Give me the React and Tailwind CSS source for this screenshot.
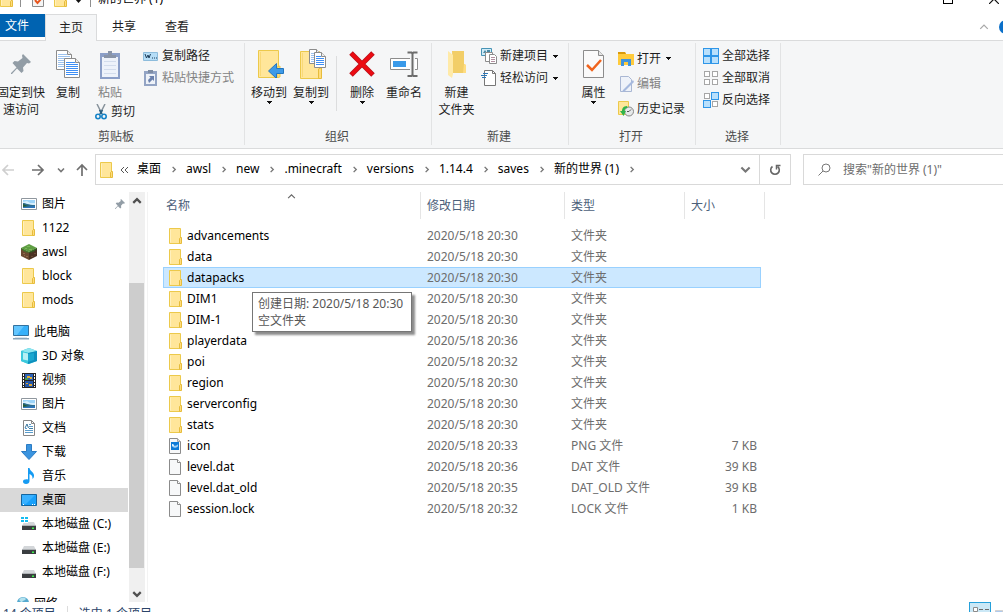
import React from 'react';

/* ---------- small glyphs ---------- */

const Caret = () => (
  <svg width="5" height="3" viewBox="0 0 5 3" className="shrink-0" shapeRendering="crispEdges">
    <path d="M0 0h5v1H4v1H3v1H2V2H1V1H0z" fill="#111" />
  </svg>
);

const Chevron = ({ dir = 'right', color = '#777', size = 8, stroke = 1.6 }) => {
  const paths = {
    right: 'M3 1 L6 4 L3 7',
    down: 'M1 2.5 L4 5.5 L7 2.5',
    up: 'M1 5.5 L4 2.5 L7 5.5',
  };
  return (
    <svg width={size} height={size} viewBox="0 0 8 8" fill="none" className="shrink-0">
      <path d={paths[dir]} stroke={color} strokeWidth={stroke} />
    </svg>
  );
};

/* ---------- file and folder icons ---------- */

const FolderIcon = () => (
  <svg width="14" height="16" viewBox="0 0 14 16" className="shrink-0">
    <path d="M.5 .5h11v15H.5z" fill="#ffe69a" stroke="#ecc94b" />
    <path d="M1.5 1.5v13" stroke="#fff0bd" />
    <path d="M10.5 10.5l1.5-1.5l.5 1v5.5h-2z" fill="#ffdc7c" stroke="#e6bc3c" />
  </svg>
);

const FileIcon = () => (
  <svg width="14" height="16" viewBox="0 0 14 16" className="shrink-0">
    <path d="M.5 .5h8l3 3v12H.5z" fill="#f7f8f9" stroke="#8b8b8b" />
    <path d="M8.5 .5v3h3" fill="#fff" stroke="#8b8b8b" />
  </svg>
);

const ImageFileIcon = () => (
  <svg width="14" height="16" viewBox="0 0 14 16" className="shrink-0">
    <path d="M.5 .5h8l3 3v12H.5z" fill="#f7f8f9" stroke="#8b8b8b" />
    <path d="M8.5 .5v3h3" fill="#ddd" stroke="#a5a5a5" />
    <path d="M2 4h8v8H2z" fill="#0f7bd7" />
    <path d="M3 6h1l1 1l1 2l1-2l1 1l1-2v3l-1-1l-1 2l-1-1l-1 1l-1-2l-1 1z" fill="#d9efff" />
  </svg>
);

/* ---------- navigation pane icons ---------- */

const PictureIcon = () => (
  <svg width="16" height="16" viewBox="0 0 16 16">
    <path d="M.5 2.5h15v11H.5z" fill="#fff" stroke="#8f979e" />
    <path d="M2 4h12v8H2z" fill="#9ed5fa" />
    <path d="M2 6l4-1l3 2h5v2H2z" fill="#d7effd" />
    <path d="M2 7c3 0 5 2 12 2v3H2z" fill="#2e6d8f" />
    <path d="M2 8c3 1 4 2 7 2l-7 1z" fill="#255a38" />
    <path d="M2 11l12-1v2H2z" fill="#2c75bc" />
  </svg>
);

const GrassBlockIcon = () => (
  <svg width="16" height="16" viewBox="0 0 16 16">
    <path d="M0 4l8 4v8l-7-3.500L0 12z" fill="#6b4a33" />
    <path d="M16 4L8 8v8l7-3.500l1-.5z" fill="#4b3223" />
    <path d="M8 0l8 4l-8 4l-8-4z" fill="#5f9e43" />
    <path d="M0 4l8 4v1l-2-1v1l-2-2v1L0 5z" fill="#3f7a2c" />
    <path d="M16 4L8 8v1l2-1v1l2-2v1l4-3z" fill="#2f6421" />
    <path d="M2 9h2v1H2zM5 12h2v1H5zM3 11h1v1H3z" fill="#8f6a4c" />
    <path d="M10 12h2v1h-2zM13 9h2v1h-2z" fill="#6a4a36" />
    <path d="M6 2h3v1H6zM8 5h3v1H8zM4 4h2v1H4z" fill="#79b857" />
  </svg>
);

const ComputerIcon = () => (
  <svg width="16" height="16" viewBox="0 0 16 16">
    <path d="M.5 1.500h15v10H.5z" fill="#37b1fa" stroke="#33729f" />
    <path d="M1 2h10L4 11H1z" fill="#63c6ff" />
    <path d="M2 13h12v1H2z" fill="#dbe5ec" />
    <path d="M0 14h16v1.500H0z" fill="#8ba6bb" />
  </svg>
);

const CubeIcon = () => (
  <svg width="16" height="16" viewBox="0 0 16 16">
    <path d="M8 0l8 3v10l-8 3l-8-3V3z" fill="#2bbfd8" />
    <path d="M8 0l8 3l-8 2l-8-2z" fill="#8fe6ef" />
    <path d="M7 5l9-2v10l-9 3z" fill="#0e8fbd" />
    <path d="M0 3l7 2v11l-7-3z" fill="#3cc9dc" />
    <path d="M2 4.500l5 1v7l-5-1z" fill="#b5f0f4" />
    <path d="M7 6l6-1v7l-6 2z" fill="#1aa7cf" />
  </svg>
);

const FilmIcon = () => (
  <svg width="16" height="16" viewBox="0 0 16 16" shapeRendering="crispEdges">
    <path d="M1 1h14v15H1z" fill="#262626" />
    <path d="M4 2h8v6H4z" fill="#2d62b8" />
    <path d="M4 9h8v6H4z" fill="#2457a8" />
    <path d="M6 4h3v2H6zM9 5h2v2H9z" fill="#e0b034" />
    <path d="M5 11h2v1H5zM8 12h3v2H8z" fill="#dca635" />
    <path d="M4 6h3v2H4z" fill="#4f9c4a" />
    <path d="M2 2h1v2H2zM2 5h1v2H2zM2 8h1v2H2zM2 11h1v2H2zM2 14h1v1H2zM13 2h1v2h-1zM13 5h1v2h-1zM13 8h1v2h-1zM13 11h1v2h-1zM13 14h1v1h-1z" fill="#fff" />
  </svg>
);

const DocumentIcon = () => (
  <svg width="16" height="16" viewBox="0 0 16 16">
    <path d="M2.500 .5h8l3 3v12h-11z" fill="#fff" stroke="#868686" />
    <path d="M10.500 .5v3h3" fill="none" stroke="#868686" />
    <path d="M8 4.500h2M8 6.500h4M4 10.500h8M4 12.500h8M4 8.500h2" stroke="#5a9ccb" />
    <path d="M4 8l2-4l1.500 4" fill="none" stroke="#3a759c" />
    <path d="M8 8h4v1H8z" fill="#3f7fa6" />
  </svg>
);

const DownloadIcon = () => (
  <svg width="16" height="16" viewBox="0 0 16 16">
    <path d="M5.500 .5h5v7h5L8 15.500L.5 7.500h5z" fill="#3b94df" stroke="#2c7cc4" />
  </svg>
);

const MusicIcon = () => (
  <svg width="16" height="16" viewBox="0 0 16 16">
    <path d="M7 0h1.500c.5 3 4 4 4.500 7c.2 2-.5 3-1.500 4c.3-3-1-4-3-5v7c0 2-1.500 3-3.500 3S2 15 2 13.500S4 11 7 11.500z" fill="#159bf3" />
  </svg>
);

const DesktopIcon = () => (
  <svg width="16" height="16" viewBox="0 0 16 16">
    <path d="M.5 2.500h15v11H.5z" fill="#18a0fb" stroke="#14659f" />
    <path d="M1 3h13L5 12H1z" fill="#39b1ff" />
    <path d="M2 12h1v1H2zM11 12h1v1h-1zM13 12h1v1h-1z" fill="#fff" />
  </svg>
);

const DriveIcon = ({ system }) => (
  <svg width="16" height="16" viewBox="0 0 16 16">
    <path d="M3 6h10l2 4H1z" fill="#d3d6d9" />
    <path d="M1 10h14v4H1z" fill="#3a3d40" />
    <path d="M1 9h14v1H1z" fill="#aeb2b5" />
    <path d="M11 11.500h2v1.500h-2z" fill="#3cf04a" />
    {system && (
      <>
        <path d="M0 0h7v7H0z" fill="#fff" />
        <path d="M0 1h3v2H0zM4 1h3v2H4zM0 4h3v2H0zM4 4h3v2H4z" fill="#14bdf2" />
      </>
    )}
  </svg>
);

const NetworkIcon = () => (
  <svg width="16" height="16" viewBox="0 0 16 16">
    <circle cx="10" cy="7" r="6" fill="#55a9cf" />
    <path d="M6 4c2-3 5-3 7-1c-1 2-4 1-4 4z" fill="#b4e2ee" />
    <path d="M3 8h5v5H3z" fill="#5ab3e8" />
  </svg>
);

const PinIcon = ({ size = 10 }) => (
  <svg width={size} height={size} viewBox="0 0 20 20" className="shrink-0">
    <path d="M12 0l8 8l-2 1.500l-2-.5l-4 4.500l.5 3.500l-2 2l-4.500-4.500L1 20H0v-1l5.500-5.500L1.500 9l2-2l3.500 .5L11.500 4L11 1.500z" fill="#929da6" />
  </svg>
);

/* ---------- ribbon icons ---------- */

const Sheet = ({ x, y, w, h, line = '#6ea3e8' }) => (
  <g transform={`translate(${x} ${y})`}>
    <path d={`M.5 .5H${w - 4.5}L${w - 0.5} 4.500V${h - 0.5}H.5z`} fill="#fff" stroke="#8c8c8c" />
    <path d={`M${w - 4.5} .5V4.500H${w - 0.5}`} fill="#eee" stroke="#8c8c8c" />
    {[4, 6, 8, 10, 12, 14, 16].filter((n) => n < h - 2).map((n) => (
      <path key={n} d={`M2 ${n + 0.5}H${n < 6 ? w - 5 : w - 2}`} stroke={line} />
    ))}
  </g>
);

const CopyIcon = () => (
  <svg width="24" height="28" viewBox="0 0 24 28">
    <Sheet x={0} y={0} w={16} h={20} line="#9cc2ee" />
    <Sheet x={8} y={8} w={16} h={20} line="#3f8ff5" />
  </svg>
);

const PasteIcon = () => (
  <svg width="22" height="29" viewBox="0 0 22 29">
    <path d="M1 3h20v26H1z" fill="#8b9fc8" />
    <path d="M3 7h16v20H3z" fill="#edf2fa" />
    <path d="M5 5h12v3H5zM9 1h4v4H9z" fill="#8894a8" />
    <path d="M5 11.500h12M5 15.500h12M5 19.500h12M5 23.500h12" stroke="#d2dcec" />
  </svg>
);

const ScissorsIcon = () => (
  <svg width="14" height="16" viewBox="-1 0 14 16" fill="none" className="shrink-0">
    <path d="M2 0l5 10M10 0L5 10" stroke="#88939c" strokeWidth="1.500" />
    <path d="M4.500 6L7 10M7.500 6L5 10" stroke="#2b5f80" strokeWidth="1.500" />
    <circle cx="3" cy="12.500" r="2.200" stroke="#1683c7" strokeWidth="1.600" />
    <circle cx="9" cy="12.500" r="2.200" stroke="#1683c7" strokeWidth="1.600" />
  </svg>
);

const CopyPathIcon = () => (
  <svg width="16" height="16" viewBox="0 0 16 16" className="shrink-0">
    <path d="M.5 4.500h14v8H.5z" fill="#b5ddf7" stroke="#8dbcdc" />
    <path d="M2 6l1.500 4L5 7l1 3l1.500-4M9 10h1M11 10h1M13 10h1" fill="none" stroke="#1d3f5c" />
  </svg>
);

const PasteShortcutIcon = () => (
  <svg width="16" height="16" viewBox="0 0 16 16" className="shrink-0">
    <path d="M1 1h13v15H1z" fill="#93a4c4" />
    <path d="M3 4h9v10H3z" fill="#eef2f8" />
    <path d="M5 0h5v3H5z" fill="#7e8ca3" />
    <path d="M6 6h5v5L9.500 9.500L6 13l-1-3l2.500-2.500z" fill="#6b81ad" />
  </svg>
);

const MoveToIcon = () => (
  <svg width="26" height="28" viewBox="2 0 26 28" className="ml-1">
    <path d="M2.500 .5h20v27h-20z" fill="#ffe69a" stroke="#ecc94b" />
    <path d="M4.500 2v24" stroke="#f9d978" />
    <path d="M21 27.500V17l3-1v11z" fill="#ffdc7c" stroke="#ecc94b" />
    <path d="M27.500 18.500h-7v-5L12.500 21l8 7.500v-5h7z" fill="#3d9ae8" stroke="#2476bd" />
  </svg>
);

const CopyToIcon = () => (
  <svg width="26" height="30" viewBox="2 0 26 30" className="ml-1">
    <path d="M2.500 2.500h19v27h-19z" fill="#ffe69a" stroke="#ecc94b" />
    <path d="M4.500 4v24" stroke="#f9d978" />
    <path d="M20.500 29.500V20l3-1.500v11z" fill="#ffdc7c" stroke="#e6bc3c" />
    <Sheet x={11} y={0} w={12} h={15} line="#9cc2ee" />
    <Sheet x={16} y={3} w={12} h={16} line="#3f8ff5" />
  </svg>
);

const DeleteIcon = () => (
  <svg width="26" height="26" viewBox="0 0 26 26">
    <path d="M2 2l22 22M24 2L2 24" stroke="#b9121b" strokeWidth="5" />
    <path d="M2.500 2.500l21 21M23.500 2.500l-21 21" stroke="#ec0b12" strokeWidth="3.500" />
  </svg>
);

const RenameIcon = () => (
  <svg width="28" height="26" viewBox="0 0 28 26">
    <path d="M.5 7.500h27v11H.5z" fill="#fff" stroke="#8c8c8c" />
    <path d="M3 10h13v6H3z" fill="#3a9ae9" />
    <path d="M20 7h5v12h-5z" fill="#f5f6f7" />
    <path d="M17.500 1.500h4l1 1l1-1h4M22.500 2v22M17.500 25h4l1-1l1 1h4" fill="none" stroke="#6c6c6c" strokeWidth="2" />
  </svg>
);

const NewFolderIcon = () => (
  <svg width="20" height="28" viewBox="0 0 20 28">
    <path d="M5 1h12v13l2 1v8H6z" fill="#f2ce68" />
    <path d="M17 14l2 1v8h-3z" fill="#ffdd81" />
    <path d="M1 1l5 4v19l-1 4l-4-3z" fill="#ffeaa8" />
  </svg>
);

const NewItemIcon = () => (
  <svg width="16" height="16" viewBox="0 0 16 16" className="shrink-0">
    <path d="M.5 .5h10v7H.5z" fill="#d0ebf7" stroke="#4793b5" />
    <path d="M2 5l2-3l2 3zM6 2h3v2H6z" fill="#4a8aa5" />
    <path d="M4.500 4.500h7v9h-7z" fill="#fff" stroke="#8c8c8c" />
    <path d="M8.500 6.500h5l2 2v7h-7z" fill="#fff" stroke="#8c8c8c" />
    <path d="M10 9.500h4M10 11.500h4M10 13.500h4" stroke="#b28fa0" />
  </svg>
);

const EasyAccessIcon = () => (
  <svg width="16" height="16" viewBox="0 0 16 16" className="shrink-0">
    <path d="M3.500 .5h8l3 3v12h-11z" fill="#fff" stroke="#777" />
    <path d="M11.500 .5v3h3" fill="none" stroke="#777" />
    <path d="M2 3.500h5M0 5.500h6M1 7.500h4" stroke="#2c77b8" />
  </svg>
);

const PropertiesIcon = () => (
  <svg width="22" height="28" viewBox="0 0 22 28">
    <path d="M.5 .5h15l5 5v22H.5z" fill="#fafafa" stroke="#8c8c8c" />
    <path d="M15.500 .5v5h5" fill="#e6e6e6" stroke="#8c8c8c" />
    <path d="M4 15l5 5l9-10" fill="none" stroke="#f0641e" strokeWidth="2.500" />
  </svg>
);

const OpenIcon = () => (
  <svg width="16" height="16" viewBox="0 0 16 16" className="shrink-0">
    <path d="M0 1h7l1 2h8v11H0z" fill="#ffcb3c" />
    <path d="M0 1h7l1 2H0z" fill="#d99a0b" />
    <path d="M3 15V8h10v7h-3v-4H6v4z" fill="#3f93dd" />
  </svg>
);

const EditIcon = () => (
  <svg width="16" height="16" viewBox="0 0 16 16" className="shrink-0">
    <path d="M2.500 .5h8l3 3v12h-11z" fill="#eef2f9" stroke="#a9b7d3" />
    <path d="M15 4L5 14l-1 2l3-1l9-9z" fill="#a6b9de" />
  </svg>
);

const HistoryIcon = () => (
  <svg width="16" height="16" viewBox="0 0 16 16" className="shrink-0">
    <path d="M.5 .5h10v13H.5z" fill="#ffe69a" stroke="#ecc94b" />
    <circle cx="11" cy="10.500" r="4.500" fill="#e6e9ea" stroke="#858585" />
    <path d="M11 10.500l2-2M11 10.500h-2" fill="none" stroke="#555" />
    <path d="M9 5c-4 0-5 3-5 5H2l3.500 5L8 10H6.500c0-2 1-3 3-3z" fill="#31b44a" />
  </svg>
);

const selectCells = {
  all: [1, 1, 1, 1],
  none: [0, 0, 0, 0],
  invert: [0, 1, 1, 0],
};

const SelectIcon = ({ kind }) => (
  <svg width="16" height="16" viewBox="0 0 16 16" className="shrink-0" shapeRendering="crispEdges">
    {selectCells[kind].map((on, i) => {
      const x = (i % 2) * 8;
      const y = Math.floor(i / 2) * 8;
      return on ? (
        <rect key={i} x={x + 0.5} y={y + 0.5} width="7" height="7" fill="#b9e0fc" stroke="#2f96e8" />
      ) : (
        <rect key={i} x={x + 1.5} y={y + 1.5} width="5" height="5" fill="#fff" stroke="#a6a6a6" />
      );
    })}
  </svg>
);

/* ---------- ribbon ---------- */

const BigButton = ({ icon, lines, width = 'w-[42px]', caret, disabled }) => (
  <button
    type="button"
    disabled={disabled}
    className={`flex flex-col items-center shrink-0 ${width} ${disabled ? 'text-[#838383]' : ''}`}
  >
    <span className="flex h-7 items-center justify-center mb-[6px]">{icon}</span>
    {lines.map((line) => (
      <span key={line} className="whitespace-nowrap leading-[17px]">{line}</span>
    ))}
    {caret && <Caret />}
  </button>
);

const SmallButton = ({ icon, label, height = 'h-[22px]', caret, disabled }) => (
  <button
    type="button"
    disabled={disabled}
    className={`flex items-center gap-[3px] whitespace-nowrap ${height} ${disabled ? 'text-[#838383]' : ''}`}
  >
    {icon}
    <span>{label}</span>
    {caret && <span className="pl-[2px]"><Caret /></span>}
  </button>
);

const RibbonGroup = ({ title, width, captionPad = 'pr-0.5', children }) => (
  <section className={`shrink-0 border-r border-[#e2e3e4] ${width}`}>
    <div className="flex h-[86px] items-start">{children}</div>
    <h2 className={`text-center leading-4 text-[#4b4b4b] ${captionPad}`}>{title}</h2>
  </section>
);

const Ribbon = () => (
  <div className="flex border-y border-[#dadbdc] bg-[#f5f6f7] pt-[2px] pb-[3px]">
    <RibbonGroup title="剪贴板" width="w-[245px]" captionPad="pr-3">
      <div className="flex pt-[7px]">
        <BigButton icon={<PinIcon size={20} />} lines={['固定到快', '速访问']} />
        <BigButton icon={<CopyIcon />} lines={['复制']} width="w-[52px]" />
        <div className="w-[49px]">
          <BigButton icon={<PasteIcon />} lines={['粘贴']} width="w-8" disabled />
          <SmallButton icon={<ScissorsIcon />} label="剪切" />
        </div>
      </div>
      <div className="pt-[2px]">
        <SmallButton icon={<CopyPathIcon />} label="复制路径" />
        <SmallButton icon={<PasteShortcutIcon />} label="粘贴快捷方式" disabled />
      </div>
    </RibbonGroup>

    <RibbonGroup title="组织" width="w-[187px]">
      <div className="flex pl-[3px] pt-[7px]">
        <BigButton icon={<MoveToIcon />} lines={['移动到']} caret />
        <BigButton icon={<CopyToIcon />} lines={['复制到']} caret />
        <div className="mx-1 mt-[6px] h-[55px] border-r border-[#dcddde]" />
        <BigButton icon={<DeleteIcon />} lines={['删除']} caret />
        <BigButton icon={<RenameIcon />} lines={['重命名']} />
      </div>
    </RibbonGroup>

    <RibbonGroup title="新建" width="w-[137px]">
      <div className="pt-[7px]">
        <BigButton icon={<NewFolderIcon />} lines={['新建', '文件夹']} width="w-[49px]" />
      </div>
      <div className="pt-[2px]">
        <SmallButton icon={<NewItemIcon />} label="新建项目" caret />
        <SmallButton icon={<EasyAccessIcon />} label="轻松访问" caret />
      </div>
    </RibbonGroup>

    <RibbonGroup title="打开" width="w-[127px]">
      <div className="pt-[7px]">
        <BigButton icon={<PropertiesIcon />} lines={['属性']} width="w-[49px]" caret />
      </div>
      <div className="pt-[3px]">
        <SmallButton icon={<OpenIcon />} label="打开" height="h-[25px]" caret />
        <SmallButton icon={<EditIcon />} label="编辑" height="h-[25px]" disabled />
        <SmallButton icon={<HistoryIcon />} label="历史记录" height="h-[25px]" />
      </div>
    </RibbonGroup>

    <RibbonGroup title="选择" width="w-[85px]">
      <div className="pl-[7px] pt-[2px]">
        <SmallButton icon={<SelectIcon kind="all" />} label="全部选择" />
        <SmallButton icon={<SelectIcon kind="none" />} label="全部取消" />
        <SmallButton icon={<SelectIcon kind="invert" />} label="反向选择" />
      </div>
    </RibbonGroup>
  </div>
);

/* ---------- title bar and tabs ---------- */

const TitleBar = () => (
  <header className="flex h-[14px] shrink-0 items-end overflow-hidden">
    <div className="flex h-[30px] w-full items-center">
      <span className="w-[13px] overflow-hidden"><FolderIcon /></span>
      <span className="ml-[7px] h-4 border-l border-[#8f8f8f]" />
      <svg width="12" height="16" viewBox="0 0 12 16" className="ml-[11px]">
        <path d="M.5 .5h11v15H.5z" fill="#f5f5f5" stroke="#8c8c8c" />
        <path d="M3 9l2.500 3L9 8" fill="none" stroke="#e8561e" strokeWidth="2" />
      </svg>
      <span className="ml-[10px]"><FolderIcon /></span>
      <svg width="7" height="7" viewBox="0 0 7 7" className="ml-[7px]">
        <path d="M0 3h7L3.500 7z" fill="#111" />
      </svg>
      <span className="ml-2 h-4 border-l border-[#8f8f8f]" />
      <h1 className="ml-[7px] text-black">新的世界 (1)</h1>
      <div className="ml-auto flex items-center">
        <button type="button" aria-label="最大化" className="flex w-[46px] justify-start">
          <span className="h-[10px] w-[10px] border border-black" />
        </button>
        <button type="button" aria-label="关闭" className="w-[14px]">
          <svg width="10" height="10" viewBox="0 0 10 10">
            <path d="M0 0l10 10M10 0L0 10" stroke="#111" strokeWidth="1.200" />
          </svg>
        </button>
      </div>
    </div>
  </header>
);

const Tabs = () => (
  <nav className="flex h-[26px] shrink-0">
    <button type="button" className="h-[23px] w-[45px] bg-[#0063b1] pr-[11px] text-white">文件</button>
    <button type="button" className="relative -mb-px w-[52px] border border-b-0 border-[#dadbdc] bg-[#f5f6f7]">主页</button>
    <button type="button" className="w-[54px]">共享</button>
    <button type="button" className="w-[52px]">查看</button>
    <div className="ml-auto flex items-center overflow-hidden">
      <button type="button" aria-label="折叠功能区"><Chevron dir="up" color="#a8a8a8" size={10} stroke={1} /></button>
      <span className="ml-[10px] w-1 overflow-hidden">
        <svg width="14" height="14" viewBox="0 0 14 14" className="max-w-none">
          <circle cx="7" cy="7" r="7" fill="#0a6fc9" />
        </svg>
      </span>
    </div>
  </nav>
);

/* ---------- address bar ---------- */

const crumbs = ['桌面', 'awsl', 'new', '.minecraft', 'versions', '1.14.4', 'saves', '新的世界 (1)'];

const NavArrow = ({ d, color, label }) => (
  <button type="button" aria-label={label}>
    <svg width="14" height="14" viewBox="0 0 14 14" fill="none">
      <path d={d} stroke={color} strokeWidth="1.700" />
    </svg>
  </button>
);

const AddressBar = () => (
  <div className="flex h-[43px] shrink-0 items-start pt-[5px]">
    <div className="flex h-[31px] w-[95px] shrink-0 items-center pl-px">
      <NavArrow label="后退" color="#cfcfcf" d="M13 7H2M7 2L2 7l5 5" />
      <span className="ml-4 flex"><NavArrow label="前进" color="#6f6f6f" d="M1 7h11M7 2l5 5l-5 5" /></span>
      <button type="button" aria-label="最近位置" className="ml-3"><Chevron dir="down" /></button>
      <span className="ml-[10px] flex"><NavArrow label="上移" color="#6f6f6f" d="M7 13V2M2 7l5-5l5 5" /></span>
    </div>
    <div className="flex h-[31px] min-w-0 flex-1 items-center border border-[#d9d9d9] text-black">
      <span className="ml-1"><FolderIcon /></span>
      <svg width="9" height="8" viewBox="0 0 9 8" fill="none" className="ml-[6px] mr-2 shrink-0">
        <path d="M4 1L1 4l3 3M8 1L5 4l3 3" stroke="#555" />
      </svg>
      {crumbs.map((crumb) => (
        <React.Fragment key={crumb}>
          <a href="#" className="whitespace-nowrap pb-px">{crumb}</a>
          <span className="flex w-[25px] shrink-0 justify-center"><Chevron size={7} /></span>
        </React.Fragment>
      ))}
      <button type="button" aria-label="展开" className="ml-auto flex h-full w-7 items-center justify-center">
        <Chevron dir="down" size={11} stroke={1.5} />
      </button>
      <button type="button" aria-label="刷新" className="flex h-full w-[31px] items-center justify-center border-l border-[#d9d9d9]">
        <svg width="12" height="12" viewBox="0 0 12 12" fill="none">
          <path d="M3.500 2.500A4.300 4.300 0 1 0 8.500 2.500" stroke="#666" strokeWidth="1.600" />
          <path d="M7.500 5.500v-4h4" stroke="#666" strokeWidth="1.500" />
        </svg>
      </button>
    </div>
    <label className="ml-3 flex h-[31px] w-[200px] shrink-0 items-center border border-r-0 border-[#d9d9d9] pl-[14px]">
      <svg width="13" height="13" viewBox="0 0 13 13" fill="none" className="shrink-0">
        <circle cx="8" cy="5" r="4" stroke="#777" />
        <path d="M5 8L.5 12.500" stroke="#777" />
      </svg>
      <input
        type="search"
        aria-label="搜索"
        placeholder={'搜索"新的世界 (1)"'}
        className="ml-3 w-full min-w-0 bg-transparent outline-none placeholder:text-[#6d6d6d]"
      />
    </label>
  </div>
);

/* ---------- navigation pane ---------- */

const navGroups = [
  [
    { label: '图片', icon: <PictureIcon />, pinned: true },
    { label: '1122', icon: <FolderIcon /> },
    { label: 'awsl', icon: <GrassBlockIcon /> },
    { label: 'block', icon: <FolderIcon /> },
    { label: 'mods', icon: <FolderIcon /> },
  ],
  [
    { label: '此电脑', icon: <ComputerIcon />, root: true },
    { label: '3D 对象', icon: <CubeIcon /> },
    { label: '视频', icon: <FilmIcon /> },
    { label: '图片', icon: <PictureIcon /> },
    { label: '文档', icon: <DocumentIcon /> },
    { label: '下载', icon: <DownloadIcon /> },
    { label: '音乐', icon: <MusicIcon /> },
    { label: '桌面', icon: <DesktopIcon />, active: true },
    { label: '本地磁盘 (C:)', icon: <DriveIcon system /> },
    { label: '本地磁盘 (E:)', icon: <DriveIcon /> },
    { label: '本地磁盘 (F:)', icon: <DriveIcon /> },
  ],
  [{ label: '网络', icon: <NetworkIcon />, root: true }],
];

const NavPane = () => (
  <aside className="flex w-[148px] shrink-0 border-r border-[#f3f3f3]">
    <div className="flex w-32 flex-col gap-2 overflow-hidden">
      {navGroups.map((group, i) => (
        <ul key={i} className="shrink-0">
          {group.map((item) => (
            <li key={item.label}>
              <a
                href="#"
                className={`flex h-6 items-center whitespace-nowrap pr-[3px] text-black ${item.root ? 'pl-[13px]' : 'pl-[21px]'} ${item.active ? 'bg-[#d9d9d9]' : ''}`}
              >
                <span className="mr-[5px] flex w-4 shrink-0 justify-center">{item.icon}</span>
                {item.label}
                {item.pinned && <span className="ml-auto"><PinIcon /></span>}
              </a>
            </li>
          ))}
        </ul>
      ))}
    </div>
    <div className="ml-px flex w-4 flex-col items-center bg-[#f0f0f0]">
      <button type="button" aria-label="向上滚动" className="flex h-[17px] items-center"><Chevron dir="up" color="#505050" size={10} stroke={1.8} /></button>
      <div className="mt-[74px] mb-[17px] w-full flex-1 border-r border-[#f0f0f0] bg-[#cdcdcd]" />
      <button type="button" aria-label="向下滚动" className="flex h-[17px] items-center"><Chevron dir="down" color="#505050" size={10} stroke={1.8} /></button>
    </div>
  </aside>
);

/* ---------- file list ---------- */

const FOLDER = '文件夹';

const files = [
  { name: 'advancements', time: '20:30', type: FOLDER },
  { name: 'data', time: '20:30', type: FOLDER },
  { name: 'datapacks', time: '20:30', type: FOLDER, selected: true },
  { name: 'DIM1', time: '20:30', type: FOLDER },
  { name: 'DIM-1', time: '20:30', type: FOLDER },
  { name: 'playerdata', time: '20:36', type: FOLDER },
  { name: 'poi', time: '20:32', type: FOLDER },
  { name: 'region', time: '20:30', type: FOLDER },
  { name: 'serverconfig', time: '20:30', type: FOLDER },
  { name: 'stats', time: '20:30', type: FOLDER },
  { name: 'icon', time: '20:33', type: 'PNG 文件', size: '7 KB' },
  { name: 'level.dat', time: '20:36', type: 'DAT 文件', size: '39 KB' },
  { name: 'level.dat_old', time: '20:35', type: 'DAT_OLD 文件', size: '39 KB' },
  { name: 'session.lock', time: '20:32', type: 'LOCK 文件', size: '1 KB' },
];

const fileIcon = (file) => {
  if (file.type === FOLDER) return <FolderIcon />;
  if (file.type.startsWith('PNG')) return <ImageFileIcon />;
  return <FileIcon />;
};

const HeaderCell = ({ label, pad = 'pl-[6px]', sorted, span }) => (
  <th colSpan={span} className="h-[33px] p-0 align-top font-normal">
    <div className={`relative flex h-[27px] items-center border-r border-[#e5e5e5] ${pad}`}>
      {label}
      {sorted && (
        <span className="absolute inset-x-0 top-0 flex justify-center">
          <Chevron dir="up" color="#666" size={9} stroke={1} />
        </span>
      )}
    </div>
  </th>
);

const Tooltip = () => (
  <div
    role="tooltip"
    className="absolute left-[88px] top-6 z-10 whitespace-nowrap border border-[#767676] bg-white py-[2px] pl-[5px] pr-2 leading-[17px] text-[#575757] shadow-[3px_3px_2px_rgba(0,0,0,0.45)]"
  >
    创建日期: 2020/5/18 20:30
    <br />
    空文件夹
  </div>
);

const FileRow = ({ file }) => {
  const cell = file.selected ? 'border-y border-[#99d1ff] bg-[#cce8ff]' : '';
  return (
    <tr className="h-[21px] text-[#6d6d6d]">
      <td className={`relative p-0 ${cell} ${file.selected ? 'border-l' : ''}`}>
        <div className={`flex items-center gap-1 whitespace-nowrap text-black ${file.selected ? 'pl-[5px]' : 'pl-[6px]'}`}>
          {fileIcon(file)}
          {file.name}
        </div>
        {file.selected && <Tooltip />}
      </td>
      <td className={`p-0 pl-[6px] ${cell}`}>2020/5/18 {file.time}</td>
      <td className={`p-0 pl-[6px] ${cell}`}>{file.type}</td>
      <td className={`p-0 pr-1 text-right ${cell} ${file.selected ? 'border-r' : ''}`}>{file.size}</td>
      <td className="p-0" />
    </tr>
  );
};

const FileList = () => (
  <main className="min-w-0 flex-1 overflow-hidden pl-[15px]">
    <table className="w-[602px] table-fixed border-separate border-spacing-0 text-left leading-4">
      <colgroup>
        <col className="w-[258px]" />
        <col className="w-36" />
        <col className="w-[120px]" />
        <col className="w-[76px]" />
        <col className="w-1" />
      </colgroup>
      <thead className="text-[#4c607a]">
        <tr>
          <HeaderCell label="名称" pad="pl-[3px]" sorted />
          <HeaderCell label="修改日期" />
          <HeaderCell label="类型" />
          <HeaderCell label="大小" span={2} />
        </tr>
      </thead>
      <tbody>
        {files.map((file) => (
          <FileRow key={file.name} file={file} />
        ))}
      </tbody>
    </table>
  </main>
);

/* ---------- status bar ---------- */

const StatusBar = () => (
  <footer className="flex h-[10px] shrink-0 items-start overflow-hidden text-[#2b4468]">
    <div className="flex h-6 w-full items-center pl-[3px]">
      <span>14 个项目</span>
      <span className="mx-[11px] h-4 border-l border-[#dcdcdc]" />
      <span>选中 1 个项目</span>
      <button type="button" aria-label="详细信息" className="ml-auto h-6 w-[22px] border border-[#26a0da] bg-[#cbe8f6]">
        <svg width="20" height="22" viewBox="0 0 20 22" fill="none">
          <path d="M3.500 4.500h4v4h-4zM3.500 11.500h4v4h-4z" fill="#fff" stroke="#8b8b8b" />
          <path d="M9 6.500h4M15 6.500h4M9 13.500h4M15 13.500h4" stroke="#6b6b6b" />
        </svg>
      </button>
      <button type="button" aria-label="大图标" className="ml-1 flex w-2 overflow-hidden">
        <svg width="16" height="14" viewBox="0 0 16 14" className="max-w-none">
          <path d="M.5 .5h15v13H.5z" fill="#fff" stroke="#8b8b8b" />
          <path d="M2 2h12v10H2z" fill="#6aa5f0" />
        </svg>
      </button>
    </div>
  </footer>
);

const App = () => (
  <div className="flex h-screen flex-col overflow-hidden bg-white text-xs text-[#1e1e1e] [font-family:'Noto_Sans','Noto_Sans_CJK_SC',sans-serif]">
    <TitleBar />
    <Tabs />
    <Ribbon />
    <AddressBar />
    <div className="flex min-h-0 flex-1">
      <NavPane />
      <FileList />
    </div>
    <StatusBar />
  </div>
);

export default App;
